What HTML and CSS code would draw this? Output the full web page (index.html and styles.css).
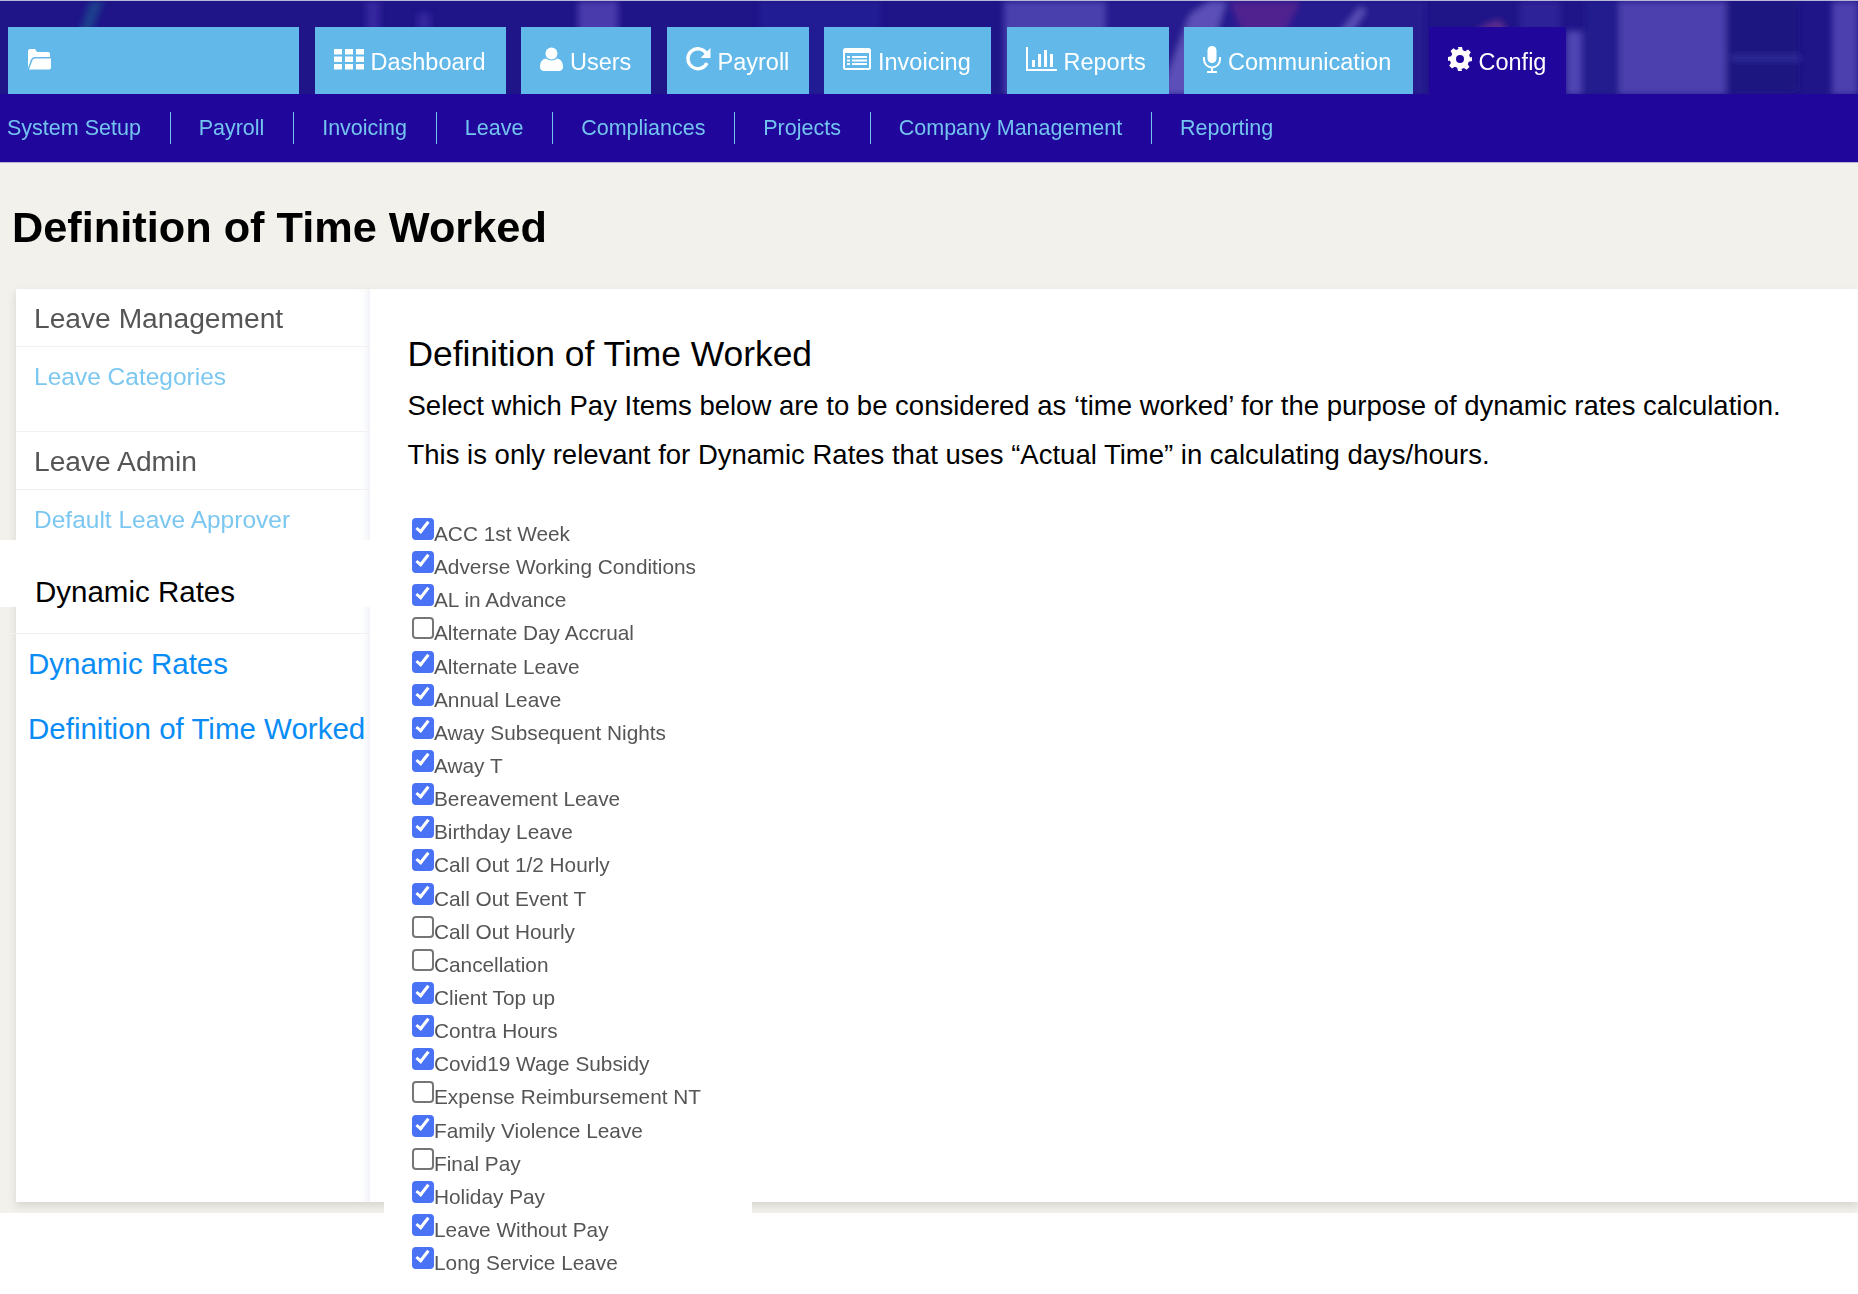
FILE: index.html
```html
<!DOCTYPE html>
<html lang="en">
<head>
    <meta charset="UTF-8">
    <title>Definition of Time Worked</title>
    <link rel="stylesheet" href="styles.css">
</head>
<body>
    <header class="top-header">
        <!-- tinted photo behind the tabs -->
        <svg class="header-photo" width="1858" height="94" viewBox="0 0 1858 94" preserveAspectRatio="none" aria-hidden="true">
            <defs><filter id="soft"><feGaussianBlur stdDeviation="3"></feGaussianBlur></filter></defs>
            <g filter="url(#soft)">
                <path d="M90 0h14L88 40 72 94H56l18-50z" fill="#1d3c8c"></path>
                <rect x="366" y="0" width="14" height="94" fill="#34289f"></rect>
                <rect x="418" y="12" width="12" height="82" fill="#34289f"></rect>
                <rect x="578" y="0" width="40" height="94" fill="#4a3bac"></rect>
                <rect x="760" y="0" width="120" height="94" fill="#241a94"></rect>
                <rect x="1004" y="0" width="101" height="94" fill="#4a3fae"></rect>
                <path d="M1105 0h320v94h-320z" fill="#261a90"></path>
                <path d="M1160 94l30-80 20-14h16l-12 40 20 54z" fill="#5b50b8"></path>
                <path d="M1230 0h70l-20 40-30 10z" fill="#4f2490"></path>
                <path d="M1290 94l70-88 6 4-60 84z" fill="#5b50b8"></path>
                <path d="M1450 94c0-40 20-70 50-76l20 30-20 46z" fill="#5a2a8c"></path>
                <rect x="1520" y="0" width="40" height="94" fill="#2f2498"></rect>
                <rect x="1566" y="30" width="16" height="64" fill="#4f45b2"></rect>
                <rect x="1585" y="0" width="34" height="94" fill="#241a8e"></rect>
                <rect x="1619" y="0" width="107" height="94" fill="#4b40ae"></rect>
                <rect x="1726" y="0" width="72" height="90" fill="#1b1280"></rect>
                <rect x="1730" y="54" width="70" height="6" fill="#2f2a9a"></rect>
                <rect x="1832" y="0" width="26" height="94" fill="#4b40ae"></rect>
            </g>
        </svg>
        <nav class="main-tabs">
            <a class="tab tab-home" href="#">
                <svg class="icon" width="24" height="22" viewBox="0 0 24 22"><path d="M1 20V3a2 2 0 0 1 2-2h5l2 3h11a2 2 0 0 1 2 2v3H8a4 4 0 0 0-4 2.500zM5.500 12A3 3 0 0 1 8 10.500h16v9a2 2 0 0 1-2 2H2z" fill="#fff"></path></svg>
            </a>
            <a class="tab tab-dashboard" href="#">
                <svg class="icon" width="30" height="22" viewBox="0 0 30 22"><path d="M0 1h8v5.500H0zM11 1h8v5.500h-8zM22 1h8v5.500h-8zM0 8.500h8V14H0zM11 8.500h8V14h-8zM22 8.500h8V14h-8zM0 16h8v5.500H0zM11 16h8v5.500h-8zM22 16h8v5.500h-8z" fill="#fff"></path></svg>
                Dashboard
            </a>
            <a class="tab tab-users" href="#">
                <svg class="icon" width="23" height="24" viewBox="0 0 23 24"><circle cx="11.500" cy="6.500" r="6" fill="#fff"></circle><path d="M0 20c0-6 3-8 6-8.500 3 2.500 8 2.500 11 0 3 .5 6 2.500 6 8.500 0 2.500-2 4-4 4H4c-2 0-4-1.500-4-4z" fill="#fff"></path></svg>
                Users
            </a>
            <a class="tab tab-payroll" href="#">
                <svg class="icon" width="25" height="24" viewBox="0 0 25 24"><path d="M21 16a10 10 0 1 1-.5-9.500" fill="none" stroke="#fff" stroke-width="3.400"></path><path d="M24.500 1v10h-10z" fill="#fff"></path></svg>
                Payroll
            </a>
            <a class="tab tab-invoicing" href="#">
                <svg class="icon" width="28" height="22" viewBox="0 0 28 22"><rect x="0" y="0" width="28" height="22" rx="2.500" fill="#fff"></rect><rect x="2" y="5" width="24" height="15" fill="#62b9e9"></rect><path d="M4 8h3v2H4zM9 8h15v2H9zM4 11.500h3v2H4zM9 11.500h15v2H9zM4 15h3v2H4zM9 15h15v2H9z" fill="#fff"></path></svg>
                Invoicing
            </a>
            <a class="tab tab-reports" href="#">
                <svg class="icon" width="31" height="24" viewBox="0 0 31 24"><path d="M0 0h2v22h29v2H0z" fill="#fff"></path><path d="M6 13h3v7H6zM12 7h3v13h-3zM18 3h3v17h-3zM24 7h3v13h-3z" fill="#fff"></path></svg>
                Reports
            </a>
            <a class="tab tab-communication" href="#">
                <svg class="icon" width="18" height="27" viewBox="0 0 18 27"><rect x="4.500" y="0" width="9" height="17" rx="4.500" fill="#fff"></rect><path d="M1 11v2.500a8 8 0 0 0 16 0V11M9 21.500V25M4 26h10" fill="none" stroke="#fff" stroke-width="2"></path></svg>
                Communication
            </a>
            <a class="tab tab-active" href="#">
                <svg class="icon" width="24" height="24" viewBox="0 0 24 24"><path fill-rule="evenodd" d="M10 0h4l.8 3.200 2.400 1 2.800-1.700 2.800 2.800-1.700 2.800 1 2.400L24 10v4l-3.200.8-1 2.400 1.700 2.800-2.800 2.800-2.800-1.700-2.400 1L14 24h-4l-.8-3.200-2.400-1-2.800 1.700-2.800-2.800 1.700-2.800-1-2.400L0 14v-4l3.200-.8 1-2.400-1.700-2.800 2.800-2.800 2.800 1.700 2.400-1zM12 8a4 4 0 1 0 0 8 4 4 0 0 0 0-8z" fill="#fff"></path></svg>
                Config
            </a>
        </nav>
    </header>

    <nav class="sub-nav">
        <a href="#">System Setup</a>
        <a href="#">Payroll</a>
        <a href="#">Invoicing</a>
        <a href="#">Leave</a>
        <a href="#">Compliances</a>
        <a href="#">Projects</a>
        <a href="#">Company Management</a>
        <a href="#">Reporting</a>
    </nav>

    <div class="page">
        <h1 class="page-title">Definition of Time Worked</h1>

        <div class="panel">
            <aside class="sidebar">
                <h3 class="side-heading">Leave Management</h3>
                <div class="side-links links-categories">
                    <a href="#">Leave Categories</a>
                </div>
                <h3 class="side-heading">Leave Admin</h3>
                <div class="side-links links-admin">
                    <a href="#">Default Leave Approver</a>
                </div>
                <h3 class="side-heading-active"><span>Dynamic Rates</span></h3>
                <div class="side-links-active">
                    <a href="#">Dynamic Rates</a>
                    <a href="#">Definition of Time Worked</a>
                </div>
            </aside>

            <main class="content">
                <h2>Definition of Time Worked</h2>
                <p>Select which Pay Items below are to be considered as ‘time worked’ for the purpose of dynamic rates calculation.</p>
                <p>This is only relevant for Dynamic Rates that uses “Actual Time” in calculating days/hours.</p>

                <div class="pay-items">
                    <label><input type="checkbox" checked>ACC 1st Week</label>
                    <label><input type="checkbox" checked>Adverse Working Conditions</label>
                    <label><input type="checkbox" checked>AL in Advance</label>
                    <label><input type="checkbox">Alternate Day Accrual</label>
                    <label><input type="checkbox" checked>Alternate Leave</label>
                    <label><input type="checkbox" checked>Annual Leave</label>
                    <label><input type="checkbox" checked>Away Subsequent Nights</label>
                    <label><input type="checkbox" checked>Away T</label>
                    <label><input type="checkbox" checked>Bereavement Leave</label>
                    <label><input type="checkbox" checked>Birthday Leave</label>
                    <label><input type="checkbox" checked>Call Out 1/2 Hourly</label>
                    <label><input type="checkbox" checked>Call Out Event T</label>
                    <label><input type="checkbox">Call Out Hourly</label>
                    <label><input type="checkbox">Cancellation</label>
                    <label><input type="checkbox" checked>Client Top up</label>
                    <label><input type="checkbox" checked>Contra Hours</label>
                    <label><input type="checkbox" checked>Covid19 Wage Subsidy</label>
                    <label><input type="checkbox">Expense Reimbursement NT</label>
                    <label><input type="checkbox" checked>Family Violence Leave</label>
                    <label><input type="checkbox">Final Pay</label>
                    <label><input type="checkbox" checked>Holiday Pay</label>
                    <label><input type="checkbox" checked>Leave Without Pay</label>
                    <label><input type="checkbox" checked>Long Service Leave</label>
                </div>
            </main>
        </div>
    </div>
</body>
</html>
```

FILE: styles.css
```css
html, body {
    height: 1294px;
    overflow: hidden;
}

body {
    margin: 0;
    background-color: #fff;
    font-family: "Liberation Sans", Arial, sans-serif;
    color: #000;
}

a {
    text-decoration: none;
}

/* header */
.top-header {
    position: relative;
    height: 94px;
    background-color: #1f1488;
    box-sizing: border-box;
    border-top: 1px solid #b9b7d6;
    overflow: hidden;
}

.header-photo {
    position: absolute;
    left: 0;
    top: 0;
}

.main-tabs {
    position: relative;
    display: flex;
    gap: 15.5px;
    padding: 26px 0 0 8px;
    filter: blur(0.6px);
}

.tab {
    display: flex;
    align-items: center;
    gap: 7px;
    height: 67px;
    padding: 3px 0 0 19px;
    box-sizing: border-box;
    background-color: #62b9e9;
    color: #fff;
    font-size: 23.5px;
}

.tab .icon {
    flex: none;
    margin-top: -6px;
}

.tab-home {
    width: 291px;
}

.tab-dashboard { width: 191px; }
.tab-users { width: 130px; }
.tab-payroll { width: 142px; }
.tab-invoicing { width: 167px; }
.tab-reports { width: 162px; }
.tab-communication { width: 229px; }

.tab-active {
    width: 137px;
    background-color: #20069a;
}

/* second row */
.sub-nav {
    display: flex;
    align-items: center;
    height: 69px;
    padding-left: 7px;
    background-color: #20069a;
    box-sizing: border-box;
    border-bottom: 1px solid #b9b7d6;
    filter: blur(0.5px);
}

.sub-nav a {
    padding: 4px 29px 4px 27.8px;
    line-height: 24px;
    color: #74c4f0;
    font-size: 21.5px;
    border-right: 1px solid #74c4f0;
}

.sub-nav a:first-child {
    padding-left: 0;
}

.sub-nav a:last-child {
    border-right: none;
}

/* page */
.page {
    height: 1050px;
    background-color: #f2f1ec;
}

.page-title {
    margin: 0;
    height: 126px;
    padding: 38px 0 0 12px;
    box-sizing: border-box;
    font-size: 43.3px;
    line-height: 52px;
    font-weight: bold;
    filter: blur(0.3px);
}

.panel {
    display: flex;
    height: 913px;
    margin-left: 16px;
    box-shadow: 0 4px 8px rgba(120, 120, 105, 0.22);
}

/* left menu */
.sidebar {
    width: 354px;
    flex: none;
    background-color: #fff;
    box-shadow: inset -10px 0 10px -8px rgba(120, 130, 170, 0.14);
}

.side-heading {
    margin: 0;
    height: 58px;
    padding-left: 18px;
    box-sizing: border-box;
    border-bottom: 1px solid #f1f1f1;
    font-size: 28.2px;
    line-height: 59px;
    font-weight: normal;
    color: #555;
    filter: blur(0.4px);
}

.side-links {
    padding-left: 18px;
    box-sizing: border-box;
    border-bottom: 1px solid #f1f1f1;
    font-size: 24.5px;
    filter: blur(0.4px);
}

.side-links a {
    color: #7cc7f0;
}

.links-categories {
    height: 85px;
    padding-top: 16px;
}

.links-admin {
    height: 50px;
    padding-top: 16px;
    border-bottom: none;
}

.side-heading-active {
    margin: 0 0 0 -16px;
    height: 94px;
    border-bottom: 1px solid #f1f1f1;
    box-sizing: border-box;
    font-size: 29.5px;
    font-weight: normal;
}

.side-heading-active span {
    display: block;
    height: 67px;
    padding: 35px 0 0 35px;
    box-sizing: border-box;
    background-color: #fff;
    line-height: 34px;
}

.side-links-active {
    display: flex;
    flex-direction: column;
    gap: 31px;
    padding: 13px 0 0 12px;
    font-size: 29.5px;
    line-height: 34px;
    white-space: nowrap;
}

.side-links-active a {
    color: #0a8cf5;
}

/* right panel */
.content {
    flex: 1;
    height: 913px;
    padding: 45px 0 0 37.5px;
    box-sizing: border-box;
    background-color: #fff;
}

.content h2 {
    margin: 0;
    font-size: 35.4px;
    line-height: 40px;
    font-weight: normal;
}

.content p {
    margin: 0;
    font-size: 27.5px;
    line-height: 50px;
}

.content h2 + p {
    margin-top: 7px;
    margin-bottom: -1px;
}

.pay-items {
    width: 368px;
    margin: 41px 0 0 -23.5px;
    padding-left: 28px;
    box-sizing: border-box;
    background-color: #fff;
    filter: blur(0.4px);
}

.pay-items label {
    display: flex;
    align-items: flex-start;
    height: 33.15px;
    font-size: 20.8px;
    line-height: 26px;
    color: #555;
    white-space: nowrap;
}

.pay-items input {
    appearance: none;
    position: relative;
    flex: none;
    width: 22px;
    height: 22px;
    margin: 0;
    box-sizing: border-box;
    border: 2px solid #767676;
    border-radius: 4px;
    background-color: #fff;
    top: -3px;
}

.pay-items input:checked {
    border-color: #4a72f5;
    background-color: #4a72f5;
}

.pay-items input:checked::after {
    content: "";
    position: absolute;
    left: 5px;
    top: -1px;
    width: 7px;
    height: 14px;
    border: solid #fff;
    border-width: 0 3px 3px 0;
    box-sizing: border-box;
    transform: rotate(38deg);
}
```
